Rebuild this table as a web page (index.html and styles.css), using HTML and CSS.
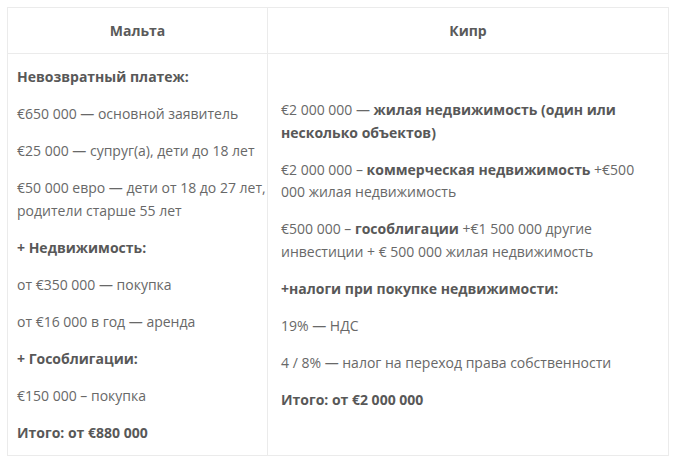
FILE: index.html
```html
<!DOCTYPE html>
<html lang="ru">
<head>
<meta charset="utf-8">
<link rel="stylesheet" href="styles.css">
</head>
<body>
<div class="wrap">
<table class="cmp">
  <thead>
    <tr>
      <th class="col-a">Мальта</th>
      <th class="col-b">Кипр</th>
    </tr>
  </thead>
  <tbody>
    <tr>
      <td class="col-a">
        <p><strong>Невозвратный платеж:</strong></p>
        <p>€650 000 — основной заявитель</p>
        <p>€25 000 — супруг(а), дети до 18 лет</p>
        <p>€50 000 евро — дети от 18 до 27 лет, родители старше 55 лет</p>
        <p><strong>+ Недвижимость:</strong></p>
        <p>от €350 000 — покупка</p>
        <p>от €16 000 в год — аренда</p>
        <p><strong>+ Гособлигации:</strong></p>
        <p>€150 000 – покупка</p>
        <p><strong>Итого: от €880 000</strong></p>
      </td>
      <td class="col-b">
        <p>€2 000 000 — <strong>жилая недвижимость (один или несколько объектов)</strong></p>
        <p>€2 000 000 – <strong>коммерческая недвижимость</strong> +€500 000 жилая недвижимость</p>
        <p>€500 000 – <strong>гособлигации</strong> +€1 500 000 другие инвестиции + € 500 000 жилая недвижимость</p>
        <p><strong>+налоги при покупке недвижимости:</strong></p>
        <p>19% — НДС</p>
        <p>4 / 8% — налог на переход права собственности</p>
        <p><strong>Итого: от €2 000 000</strong></p>
      </td>
    </tr>
  </tbody>
</table>
</div>
</body>
</html>
```
FILE: styles.css
```css
html, body {
  margin: 0;
  padding: 0;
  background: #ffffff;
}
body {
  font-family: "Open Sans", "Liberation Sans", sans-serif;
  font-size: 14px;
  color: #686868;
}
.wrap {
  padding: 7px 10px 0 7px;
}
.cmp {
  border-collapse: collapse;
  width: 662px;
  table-layout: fixed;
}
.cmp th,
.cmp td {
  border: 1px solid #ebebeb;
}
.cmp th {
  height: 45px;
  padding: 0;
  font-weight: 700;
  color: #5a5a5a;
  text-align: center;
  vertical-align: middle;
}
.cmp th.col-a { width: 259px; }
.cmp td {
  vertical-align: middle;
  padding: 12px 14px 11px 13px;
}
.cmp td.col-a {
  padding-left: 9px;
  padding-right: 1px;
}
.cmp p {
  margin: 0 0 14.5px;
  line-height: 22.5px;
}
.cmp p:last-child {
  margin-bottom: 0;
}
.cmp strong {
  color: #585858;
  font-weight: 700;
}
```
